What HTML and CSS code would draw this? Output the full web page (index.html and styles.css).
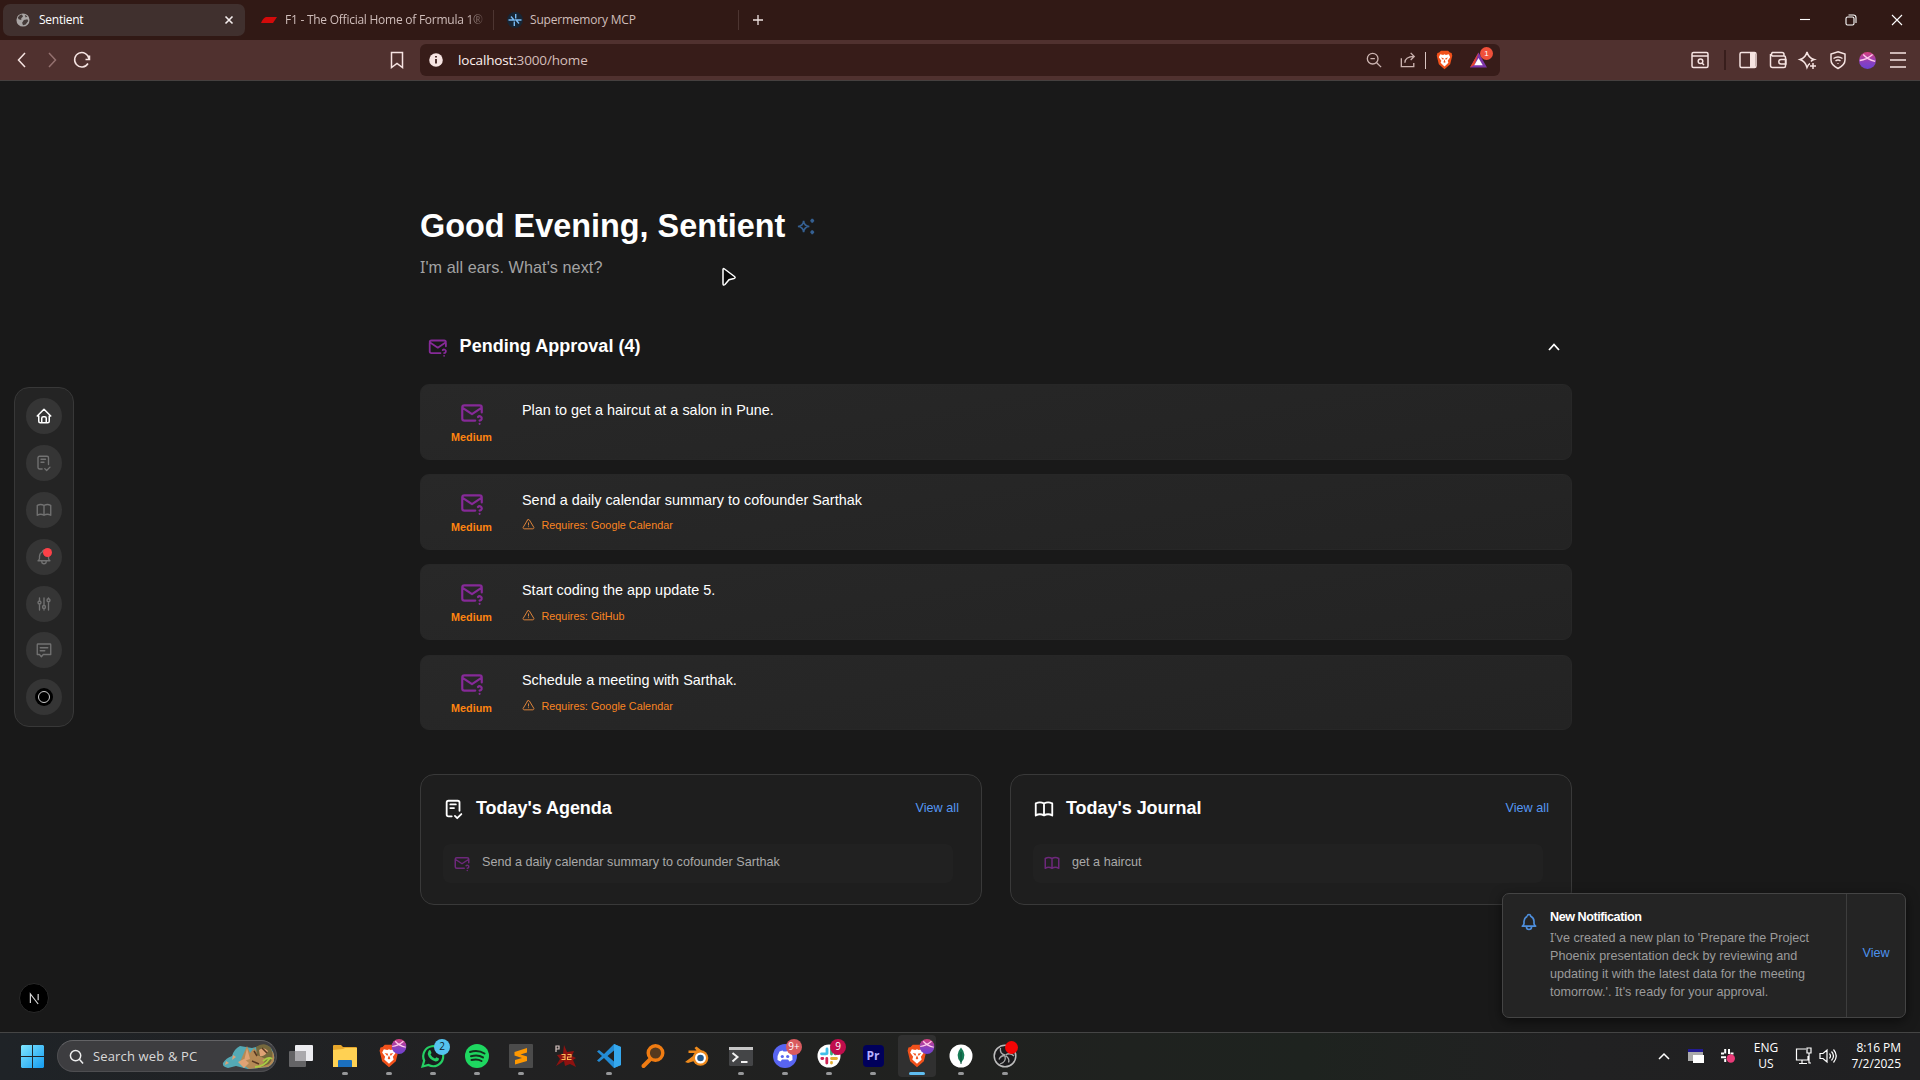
FILE: index.html
```html
<!DOCTYPE html>
<html lang="en">
<head>
<meta charset="utf-8">
<title>Sentient</title>
<link rel="stylesheet" href="styles.css">
</head>
<body>
<svg class="defs" aria-hidden="true">
  <symbol id="mail-q" viewBox="0 0 24 24"><path d="M15 19h-10a2 2 0 0 1-2-2v-10a2 2 0 0 1 2-2h14a2 2 0 0 1 2 2v4.5M19 22v.01M19 19a2.003 2.003 0 0 0 .914-3.782a1.98 1.98 0 0 0-2.414.483M3 7l9 6l9-6"/></symbol>
  <symbol id="journal" viewBox="0 0 24 24"><path d="M3 19a9 9 0 0 1 9 0a9 9 0 0 1 9 0M3 6a9 9 0 0 1 9 0a9 9 0 0 1 9 0M3 6v13M12 6v13M21 6v13"/></symbol>
  <symbol id="agenda" viewBox="0 0 24 24"><path d="M9.500 20h-3.500a2 2 0 0 1-2-2v-13a2 2 0 0 1 2-2h10a2 2 0 0 1 2 2v9M8 7h6M8 11h4M13 19.500l2.500 2.500l4.500-4.500"/></symbol>
  <symbol id="bell" viewBox="0 0 24 24"><path d="M10 5a2 2 0 1 1 4 0a7 7 0 0 1 4 6v3a4 4 0 0 0 2 3h-16a4 4 0 0 0 2-3v-3a7 7 0 0 1 4-6M9 17v1a3 3 0 0 0 6 0v-1"/></symbol>
  <symbol id="alert" viewBox="0 0 24 24"><path d="M12 9v4M10.363 3.591l-8.106 13.534a1.914 1.914 0 0 0 1.636 2.871h16.214a1.914 1.914 0 0 0 1.636-2.870l-8.106-13.536a1.914 1.914 0 0 0-3.274 0zM12 16h.01"/></symbol>
  <symbol id="lion" viewBox="0 0 24 28"><path d="M7 1h10l2.500 2.500 2.500.5 1 4-3 12-8 7-8-7L1 8l1-4 2.500-.5z" fill="#f1511b"/><path d="M6 6l4 1 2-1 2 1 4-1 2 4-3.500 5 1 3-5.500 5-5.500-5 1-3L4 10z" fill="#fff"/><path d="M7 10.500l4 1-1 2.500zM17 10.500l-4 1 1 2.500zM12 13l1.500 4-1.500 1-1.500-1z" fill="#f1511b"/></symbol>
  <symbol id="orb" viewBox="0 0 20 20"><circle cx="10" cy="10" r="10" fill="url(#orb-fill)"/><path d="M1 10Q9 9 16 3M5 3Q10 9 19 11" fill="none" stroke="#ffc9ea" stroke-width="1.600"/></symbol>
  <defs>
    <linearGradient id="orb-fill" x1="0" y1="0" x2="0" y2="1"><stop offset="0" stop-color="#d6407f"/><stop offset=".6" stop-color="#8a3fc0"/><stop offset="1" stop-color="#6c42d0"/></linearGradient>
    <linearGradient id="win-fill" x1="0" y1="0" x2="1" y2="1"><stop offset="0" stop-color="#7fe6ff"/><stop offset="1" stop-color="#149bf0"/></linearGradient>
  </defs>
</svg>

<header class="tabs">
  <div class="tab tab-active">
    <svg class="i14" viewBox="0 0 16 16"><circle cx="8" cy="8" r="7.500" fill="#a9a5a4"/><path d="M2 5q3-4 5-3l1 2-2 2v2l-3-1zM9 8l4-1 1 2-3 4-3 1-1-3zM10 2l3 2-2 1z" fill="#453b39"/></svg>
    <span class="tab-title">Sentient</span>
    <svg class="i10 tab-close" viewBox="0 0 10 10"><path d="M1.500 1.500l7 7M8.500 1.500l-7 7" stroke="#f5eeee" stroke-width="1.600"/></svg>
  </div>
  <div class="tab tab-f1">
    <svg class="i16" viewBox="0 0 16 16"><path d="M5 5h11l-4 6H0q2-5 5-6z" fill="#d30a0a"/></svg>
    <span class="tab-title fade">F1 - The Official Home of Formula 1®</span>
  </div>
  <div class="tab tab-mem">
    <svg class="i16" viewBox="0 0 16 16"><circle cx="8" cy="8" r="8" fill="#182534"/><path d="M1.500 8h5.500l-3-3.500M14.500 8H9l3 3.500M8.700 2v4.500M7.300 14V9.500" fill="none" stroke="#79baf3" stroke-width="1.400"/></svg>
    <span class="tab-title">Supermemory MCP</span>
  </div>
  <svg class="i10 plus" viewBox="0 0 10 10"><path d="M5 0v10M0 5h10" stroke="#eee2e0" stroke-width="1.300"/></svg>
  <div class="win-controls">
    <svg viewBox="0 0 12 12"><path d="M1 5.500h10"/></svg>
    <svg viewBox="0 0 12 12"><rect x="1" y="3" width="8" height="8" rx="1.500"/><path d="M3.500 1h5a2.500 2.500 0 0 1 2.500 2.500v5.500"/></svg>
    <svg viewBox="0 0 12 12"><path d="M1 1l10 10M11 1L1 11"/></svg>
  </div>
</header>

<nav class="toolbar">
  <div class="nav-buttons">
    <svg viewBox="0 0 18 18"><path d="M12 2L5.500 9l6.500 7"/></svg>
    <svg class="dim" viewBox="0 0 18 18"><path d="M6 2l6.500 7L6 16"/></svg>
    <svg viewBox="0 0 18 18"><path d="M16.500 4.500v4H12.500M16 8A7.200 7.200 0 1 0 15 12.500"/></svg>
  </div>
  <svg class="bookmark" viewBox="0 0 14 18"><path d="M1.500 1.500h11v15L7 12.500l-5.500 4z"/></svg>
  <div class="url-bar">
    <svg class="i14" viewBox="0 0 14 14"><circle cx="7" cy="7" r="6.800" fill="#f6e4e2"/><path d="M7 6v4.500M7 3v1.600" stroke="#3c1f1d" stroke-width="1.800"/></svg>
    <span class="url"><b>localhost:</b>3000/home</span>
    <div class="url-icons">
      <svg class="line" viewBox="0 0 18 18"><circle cx="7.500" cy="7.500" r="6"/><path d="M12 12l5 5M5 7.500h5"/></svg>
      <svg class="line" viewBox="0 0 18 18"><path d="M1.500 7v9.500h14v-4M5.500 12q0-6.500 10.500-7M12 1l4 4-4 4"/></svg>
      <i class="url-sep"></i>
      <svg viewBox="0 0 24 28" class="brave"><use href="#lion"/></svg>
      <span class="bat"><svg viewBox="0 0 18 18"><path d="M9 1L0 17h18z" fill="#7b35a8"/><path d="M9 1L0 17l5-3z" fill="#e5432d"/><path d="M9 7l-4.500 7.500h9z" fill="#fff"/></svg><em>1</em></span>
    </div>
  </div>
  <div class="tools">
    <svg viewBox="0 0 18 18"><rect x="1" y="1.500" width="16" height="15" rx="1.500"/><path d="M1 5h16M11 12l2 2"/><circle cx="9.500" cy="10.200" r="2.300"/></svg>
    <i class="tool-sep"></i>
    <svg viewBox="0 0 18 18"><rect x="1" y="1.500" width="16" height="15" rx="1.500"/><path d="M13.500 2v14" stroke-width="5"/></svg>
    <svg viewBox="0 0 18 18"><path d="M15 5V3.500A2 2 0 0 0 13 1.500H3.500a2 2 0 0 0 0 3.500H15a1.500 1.500 0 0 1 1.500 1.500V15A1.500 1.500 0 0 1 15 16.500H3.500A2 2 0 0 1 1.500 14.500V3M17 8.500h-5a2 2 0 0 0 0 4.500h5z"/></svg>
    <svg viewBox="0 0 18 18"><path d="M11 12.500Q9.500 13 8 16.500Q6.500 10.500 1 8.500Q6.500 7 8 1Q9.500 7 15 8.500Q13 9 12 10.500M14 12v6M11 15h6"/></svg>
    <svg viewBox="0 0 18 18"><path d="M9 .8l7 2.200v6q0 5-7 8.500Q2 14 2 9V3zM4.500 7.500q4.500-3 9 0M6.500 10q2.500-2 5 0M9 12v.8"/></svg>
    <svg class="profile" viewBox="0 0 20 20"><use href="#orb"/></svg>
    <svg class="menu" viewBox="0 0 18 18"><path d="M1 2h16M1 9h16M1 16h16"/></svg>
  </div>
</nav>

<main class="page">
  <aside class="rail">
    <span class="rail-item on"><svg viewBox="0 0 24 24"><path d="M5 12H3l9-9l9 9h-2M5 12v7a2 2 0 0 0 2 2h10a2 2 0 0 0 2-2v-7M9 21v-6a2 2 0 0 1 2-2h2a2 2 0 0 1 2 2v6"/></svg></span>
    <span class="rail-item"><svg><use href="#agenda"/></svg></span>
    <span class="rail-item"><svg><use href="#journal"/></svg></span>
    <span class="rail-item"><svg><use href="#bell"/></svg><i class="dot"></i></span>
    <span class="rail-item"><svg viewBox="0 0 24 24"><path d="M4 10a2 2 0 1 0 4 0a2 2 0 0 0-4 0M6 4v4M6 12v8M10 16a2 2 0 1 0 4 0a2 2 0 0 0-4 0M12 4v10M12 18v2M16 7a2 2 0 1 0 4 0a2 2 0 0 0-4 0M18 4v1M18 9v11"/></svg></span>
    <span class="rail-item"><svg viewBox="0 0 24 24"><path d="M7 9h10M7 13h6M3 5a1 1 0 0 1 1-1h16a1 1 0 0 1 1 1v13h-10l-2.500 3l-2.500-3H3z"/></svg></span>
    <span class="rail-item"><i class="avatar"></i></span>
  </aside>

  <section class="content">
    <div class="greeting">
      <h1>Good Evening, Sentient</h1>
      <svg class="sparkles" viewBox="0 0 24 24"><path d="M16 18a2 2 0 0 1 2 2a2 2 0 0 1 2-2a2 2 0 0 1-2-2a2 2 0 0 1-2 2zM16 6a2 2 0 0 1 2 2a2 2 0 0 1 2-2a2 2 0 0 1-2-2a2 2 0 0 1-2 2zM9 18a6 6 0 0 1 6-6a6 6 0 0 1-6-6a6 6 0 0 1-6 6a6 6 0 0 1 6 6z"/></svg>
    </div>
    <p class="sub"><span class="cap">I</span>'m all ears. What's next?</p>

    <div class="section-head">
      <svg class="mail"><use href="#mail-q"/></svg>
      <h2>Pending Approval (4)</h2>
      <svg class="chevron" viewBox="0 0 14 14"><path d="M2 10l5-5.500L12 10"/></svg>
    </div>

    <div class="tasks">
      <article class="task">
        <div class="prio"><svg class="mail"><use href="#mail-q"/></svg><b>Medium</b></div>
        <div class="body"><p>Plan to get a haircut at a salon in Pune.</p></div>
      </article>
      <article class="task">
        <div class="prio"><svg class="mail"><use href="#mail-q"/></svg><b>Medium</b></div>
        <div class="body"><p>Send a daily calendar summary to cofounder Sarthak</p><small><svg><use href="#alert"/></svg>Requires: Google Calendar</small></div>
      </article>
      <article class="task">
        <div class="prio"><svg class="mail"><use href="#mail-q"/></svg><b>Medium</b></div>
        <div class="body"><p>Start coding the app update 5.</p><small><svg><use href="#alert"/></svg>Requires: GitHub</small></div>
      </article>
      <article class="task">
        <div class="prio"><svg class="mail"><use href="#mail-q"/></svg><b>Medium</b></div>
        <div class="body"><p>Schedule a meeting with Sarthak.</p><small><svg><use href="#alert"/></svg>Requires: Google Calendar</small></div>
      </article>
    </div>

    <div class="panels">
      <section class="panel">
        <header><svg><use href="#agenda"/></svg><h3>Today's Agenda</h3><a>View all</a></header>
        <div class="row"><svg><use href="#mail-q"/></svg><span>Send a daily calendar summary to cofounder Sarthak</span></div>
      </section>
      <section class="panel">
        <header><svg><use href="#journal"/></svg><h3>Today's Journal</h3><a>View all</a></header>
        <div class="row"><svg><use href="#journal"/></svg><span>get a haircut</span></div>
      </section>
    </div>
  </section>

  <div class="next-badge"><svg viewBox="0 0 12 12"><path d="M1.500 11V1L10 12M10 1v7" fill="none" stroke="#d8d8d8" stroke-width="1.300"/></svg></div>

  <div class="toast">
    <svg><use href="#bell"/></svg>
    <div class="toast-text">
      <strong>New Notification</strong>
      <p><span class="cap">I</span>'ve created a new plan to 'Prepare the Project<br>Phoenix presentation deck by reviewing and<br>updating it with the latest data for the meeting<br>tomorrow.'. <span class="cap">I</span>t's ready for your approval.</p>
    </div>
    <a>View</a>
  </div>

  <svg class="cursor" viewBox="0 0 16 20"><path d="M2 2.500Q2 1 3.500 2l10 7.500q1.500 1.300-.5 2l-5 1.200-4 4.800q-2 1.500-2-1z" fill="#080808" stroke="#fff" stroke-width="1.500"/></svg>
</main>

<footer class="taskbar">
  <svg class="start" viewBox="0 0 24 24"><path d="M1 0h10.500v11.500H0V1zM12.500 0H23l1 1v10.500H12.500zM0 12.500h11.500V24H1l-1-1zM12.500 12.500H24V23l-1 1H12.500z" fill="url(#win-fill)"/></svg>
  <div class="search">
    <svg class="glass" viewBox="0 0 16 16"><circle cx="7" cy="7" r="5.500"/><path d="M11 11l4 4.500"/></svg>
    <span>Search web &amp; PC</span>
    <svg class="art" viewBox="0 0 52 26"><path d="M0 20q3-5 9-7 2-7 8-10l12 2 8-2q10-3 13 6 4 10-5 15l-20 2-12-3-8 2q-6-1-5-5z" fill="#54a9b5"/><path d="M20 12l4-9 3 7 4-5 4 5 5 1 3-8 7 6q4 10-5 15l-19 2-9-7z" fill="#b58a55"/><path d="M33 4q8-6 15 1 4 10-2 16l-8 3 5-8-9-4z" fill="#75683c"/><path d="M36 7q5-4 9 1-3 6-8 5zM24 5l3 11-6 2zM3 18l3 2-4 2zM10 12l3 2-4 3zM15 19l6-3 5 4-5 5z" fill="#dfa375"/><path d="M32 24q9 0 15-9M40 18q6-5 9-2" stroke="#a8cb43" stroke-width="1.800" fill="none"/><path d="M31 8l3 5M39 5l5 5M29 18l7 3" stroke="#573822" stroke-width="1.500"/></svg>
  </div>
  <div class="apps">
    <span class="app"><svg viewBox="0 0 24 24"><rect y="7" width="17" height="16" rx="1" fill="#646466"/><rect x="6" y="1" width="18" height="16" rx="1" fill="#ececf0"/><path d="M6 7h11v10H6z" fill="#aaa9ad"/></svg></span>
    <span class="app run"><svg viewBox="0 0 24 24"><path d="M0 2q0-1 1-1h7l2 2h13q1 0 1 1v18H0z" fill="#e7a62b"/><path d="M0 6l10-1 2-1h12v19H0z" fill="#ffd153"/><path d="M5 23v-6q0-1 1-1h12q1 0 1 1v6z" fill="#1b6fbd"/></svg></span>
    <span class="app run"><svg viewBox="0 0 24 28"><use href="#lion"/></svg><svg class="mini-orb" viewBox="0 0 20 20"><use href="#orb"/></svg></span>
    <span class="app run"><svg viewBox="0 0 24 24"><path d="M1.500 22.500l1.700-6A10 10 0 1 1 7.500 21z" fill="#191d1e" stroke="#25cf63" stroke-width="2.200"/><path d="M7.500 7q1.500-2 2.500.5l.5 1.500-1 1.500q1.500 3 4.500 4l1.500-1.300 2.500 1.300q0 3-3.500 3Q8 15.500 6.700 10z" fill="#25cf63"/></svg><em class="badge blue">2</em></span>
    <span class="app run"><svg viewBox="0 0 24 24"><circle cx="12" cy="12" r="12" fill="#1ed760"/><path d="M5 8q8-2.500 14.500 1.500M6 12.200q7-2 12 1.200M6.500 16q6-1.500 10 1" fill="none" stroke="#14301d" stroke-width="2" stroke-linecap="round"/></svg></span>
    <span class="app run"><svg viewBox="0 0 24 24"><rect width="24" height="24" rx="1" fill="#4b4b4b"/><path d="M5.500 8L18 4v4.500l-6.500 2 6.500 2V17L6 20.500V16l7-2-7.500-2.500z" fill="#ff9800"/></svg></span>
    <span class="app"><svg viewBox="0 0 24 24"><path d="M11 1l3 7 7-1-2 5 4 2-3 2 3 7-6-3-5 2-1-5-8 5 4-7-3-4 6-1z" fill="#8f1210"/><path d="M3 8V2h3v3H3" fill="none" stroke="#d8c5c2" stroke-width="1.200"/><path d="M8.500 10.500h3.500v5H8.500M9.500 13H12M14.500 10.500H18v2.500h-3.500v2.500H18.500" fill="none" stroke="#ffbb57" stroke-width="1.100"/></svg></span>
    <span class="app run"><svg viewBox="0 0 24 24"><path d="M17 0l7 3v18l-7 3L7 14l-5 4-2-1.500L5 12 0 7.500 2 6l5 4zM17 6.500L10.500 12l6.500 5.500z" fill="#238bd4" fill-rule="evenodd"/><path d="M17 0l7 3v18l-7 3z" fill="#35a8ee"/></svg></span>
    <span class="app"><svg viewBox="0 0 24 24"><circle cx="14.500" cy="9" r="7.300" fill="#55391e" stroke="#f07c12" stroke-width="3.400"/><path d="M9.500 15L2.500 22" stroke="#f07c12" stroke-width="4" stroke-linecap="round"/></svg></span>
    <span class="app"><svg viewBox="0 0 24 24"><path d="M0 18L12 9H3.500V6.500h8L9.500 4l2-1.500L21 10l-9 6-9 3z" fill="#ee8a1c"/><circle cx="15.500" cy="14" r="7.800" fill="#ee8a1c"/><circle cx="15.500" cy="14" r="5.500" fill="#fff"/><circle cx="15.500" cy="14" r="3.300" fill="#23588c"/></svg></span>
    <span class="app run"><svg viewBox="0 0 24 24"><rect y="3" width="24" height="19" rx="1.500" fill="#444547"/><path d="M0 3h24v3H0z" fill="#c6c6c6"/><path d="M3.500 9l5 4-5 4.500M12 18h6.500" fill="none" stroke="#f2f2f2" stroke-width="2"/></svg></span>
    <span class="app run"><svg viewBox="0 0 24 24"><circle cx="12" cy="12" r="12" fill="#5865f2"/><path d="M6.500 7.500l3-1 1 1h3l1-1 3 1q2.500 4 2 8.500l-3 1.500-1.500-2H9l-1.500 2L4.500 16Q4 11.500 6.500 7.500z" fill="#fff"/><circle cx="9.300" cy="12.500" r="1.600" fill="#5865f2"/><circle cx="14.700" cy="12.500" r="1.600" fill="#5865f2"/></svg><em class="badge red">9+</em></span>
    <span class="app run"><svg viewBox="0 0 24 24"><circle cx="12" cy="12" r="11.500" fill="#fff"/><g fill="none" stroke-width="2.800" stroke-linecap="round"><path d="M10 5v4.500M4.500 9.800H9" stroke="#42bfe8"/><path d="M14.500 5v5M19 9.800h-1" stroke="#35b27c"/><path d="M14.500 14.500h5M14.500 18.500v.5" stroke="#e5af32"/><path d="M9.800 14.500V19M4.800 14.500h1" stroke="#cf2456"/></g></svg><em class="badge crimson">9</em></span>
    <span class="app run"><span class="pr">Pr</span></span>
    <span class="app run active"><svg viewBox="0 0 24 28"><use href="#lion"/></svg><svg class="mini-orb" viewBox="0 0 20 20"><use href="#orb"/></svg></span>
    <span class="app run"><svg viewBox="0 0 24 24"><circle cx="12" cy="12" r="11.500" fill="#fff"/><path d="M12 3.500q7 8 0 15.500-7-7.500 0-15.500z" fill="#167a55"/><path d="M12 8v12" stroke="#0c513a"/></svg></span>
    <span class="app run"><svg viewBox="0 0 24 24"><circle cx="12" cy="12" r="10.800" fill="#1b1b1d" stroke="#bcbcbc" stroke-width="1.500"/><path d="M12 11Q6.500 10 7.500 4M12.500 11q4.500-3 8.500 1M12 12q1.500 6-5 8M12 11.500q-4.500 0-6 4M12.500 11.500q4.500 3 3 7" fill="none" stroke="#aaa" stroke-width="1.300"/></svg><i class="rec"></i></span>
  </div>
  <div class="tray">
    <svg class="t-chev" viewBox="0 0 12 12"><path d="M1 9l5-5 5 5"/></svg>
    <svg class="t-win" viewBox="0 0 16 16"><path d="M0 1h15v12H0z" fill="#aaa"/><path d="M0 1h15v3H0z" fill="#221b93"/><path d="M5 7h11v8H5z" fill="#fff"/></svg>
    <svg class="t-slack" viewBox="0 0 16 16"><path d="M5.200 1v4.500M1 5.500h3M9 1v5M10.500 5.500H13.500M1 9.200h5M5.200 11v3" fill="none" stroke="#fff" stroke-width="2"/><circle cx="10.800" cy="10.500" r="4.200" fill="#e93a78"/></svg>
    <div class="lang">ENG<br>US</div>
    <svg class="t-mon" viewBox="0 0 18 18"><path d="M11 2H1.500v11H13V9M4 16.500h8M7 13v3M12 1h4v5h-4zM14 6v10h2"/></svg>
    <svg class="t-vol" viewBox="0 0 18 18"><path d="M1 6.500h3L8 3v12l-4-3.500H1zM10.500 6.500q2 2.500 0 5M12.500 4.500q4 4.500 0 9M14.500 2.500q5.500 6.500 0 13"/></svg>
    <div class="clock">8:16 PM<br>7/2/2025</div>
  </div>
</footer>
</body>
</html>
```
FILE: styles.css
```css
* { box-sizing: border-box; }
body {
  margin: 0; width: 1920px; height: 1080px; overflow: hidden;
  display: flex; flex-direction: column;
  background: #191919; color: #fff;
  font-family: "Liberation Sans", Arial, sans-serif;
}
h1, h2, h3, p { margin: 0; }
em, i { font-style: normal; }
svg { display: block; flex: none; overflow: visible; }
.defs { position: absolute; width: 0; height: 0; }
.i10 { width: 10px; height: 10px; }
.i14 { width: 14px; height: 14px; }
.i16 { width: 16px; height: 16px; }

/* browser chrome */
.tabs {
  height: 40px; flex: none; display: flex; align-items: center; padding-left: 3px;
  background: #311915; font-family: "Open Sans", "Noto Sans", sans-serif; font-size: 12px;
}
.tab { height: 32px; display: flex; align-items: center; color: #d0bebb; }
.tab-title { white-space: nowrap; letter-spacing: -.2px; margin-top: -1px; }
.tab-active { width: 242px; padding: 0 11px 0 13px; gap: 9px; border-radius: 7px; background: #40302e; color: #fff; }
.tab-active .tab-title { letter-spacing: -.25px; }
.tab-close { margin-left: auto; }
.tab-f1 { width: 249px; padding-left: 16px; gap: 8px; border-right: 1px solid #4d3531; }
.tab-f1 .fade { letter-spacing: -.25px; -webkit-mask-image: linear-gradient(90deg, #000 92%, #0003); mask-image: linear-gradient(90deg, #000 92%, #0003); }
.tab-mem { width: 245px; padding-left: 13px; gap: 7px; border-right: 1px solid #4d3531; }
.tab-f1, .tab-mem { height: 20px; }
.plus { margin-left: 14px; }
.win-controls { margin-left: auto; display: flex; gap: 34px; padding-right: 17px; }
.win-controls svg { width: 12px; height: 12px; fill: none; stroke: #fff; stroke-width: 1.1; }

.toolbar {
  height: 41px; flex: none; display: flex; align-items: center; padding-left: 13px;
  background: #50312f; border-bottom: 1px solid #45403f;
}
.toolbar svg { width: 18px; height: 18px; fill: none; stroke: #f6e4e2; stroke-width: 1.5; }
.nav-buttons { display: flex; gap: 12px; }
.nav-buttons .dim { stroke: #94716f; }
.toolbar .bookmark { width: 14px; margin-left: 299px; }
.url-bar {
  width: 1080px; height: 32px; margin-left: 16px; padding: 0 12px 0 9px;
  display: flex; align-items: center; border-radius: 6px; background: #371c19;
}
.url-bar .i14 { width: 14px; height: 14px; stroke: none; }
.url { margin-left: 15px; font: 13.500px "Open Sans", "Noto Sans", sans-serif; color: #d4bebb; letter-spacing: -.15px; }
.url b { font-weight: 400; color: #fff1ef; }
.url-icons { margin-left: auto; display: flex; align-items: center; }
.url-icons .line { stroke: #cbb3b0; width: 16px; height: 16px; margin-right: 18px; }
.url-icons .line + .line { margin-right: 9px; }
.url-sep { width: 1px; height: 17px; background: #d9c5c2; margin-right: 10px; }
.url-icons .brave { width: 17px; height: 20px; stroke: none; margin-right: 18px; }
.bat { position: relative; left: -1px; }
.bat svg { width: 17px; height: 18px; stroke: none; }
.bat em {
  position: absolute; left: 10px; top: -4px; width: 13px; height: 13px; border-radius: 50%;
  background: #f0503a; color: #fff; font-size: 8px; line-height: 13px; text-align: center;
}
.tools { margin-left: auto; padding-right: 13px; display: flex; align-items: center; gap: 12px; }
.tool-sep { width: 2px; height: 20px; margin: 0 1px 0 3px; background: #381e1c; }
.toolbar .profile { width: 17px; height: 19px; stroke: none; }
.toolbar .menu { margin-left: 1px; }

/* page */
.page { position: relative; height: 951px; flex: none; display: flex; align-items: center; padding-left: 14px; }
.rail {
  width: 60px; height: 340px; display: flex; flex-direction: column; align-items: center; gap: 10.900px;
  padding-top: 10.500px; border: 1px solid #383838; border-radius: 15px; background: #242424;
}
.rail-item { position: relative; width: 36px; height: 36px; border-radius: 50%; background: #353535; display: grid; place-items: center; flex: none; }
.rail svg { width: 18px; height: 18px; fill: none; stroke: #727272; stroke-width: 1.8; stroke-linecap: round; stroke-linejoin: round; }
.rail .on svg { stroke: #fff; stroke-width: 2; }
.dot { position: absolute; left: 17px; top: 9px; width: 9px; height: 9px; border-radius: 50%; background: #fb4148; }
.avatar { width: 18px; height: 18px; border-radius: 50%; background: #000; display: grid; place-items: center; }
.avatar::before { content: ""; width: 10px; height: 10px; border-radius: 50%; border: 1.500px solid #ccc; }

.content { width: 1152px; margin-left: 346px; align-self: flex-start; padding-top: 122px; }
.greeting { display: flex; align-items: center; height: 46px; gap: 10px; }
h1 { font-size: 32.400px; font-weight: 700; line-height: 46px; white-space: nowrap; }
.sparkles { width: 23px; height: 23px; fill: none; stroke: #356092; stroke-width: 1.8; }
.sub { margin-top: 5px; height: 26px; font-size: 16.200px; line-height: 26px; letter-spacing: .07px; color: #a3a3a3; }
.cap { font-family: "Noto Sans", sans-serif; font-size: .97em; line-height: 1; }
.section-head { display: flex; align-items: center; height: 50px; margin-top: 41px; padding: 0 11px 0 7px; }
.section-head .mail { width: 21.600px; height: 21.600px; margin-top: 2px; }
.mail, .row svg { fill: none; stroke: #862a98; stroke-width: 2; stroke-linecap: round; stroke-linejoin: round; }
h2 { margin-left: 11px; font-size: 18px; line-height: 26px; letter-spacing: .03px; }
.chevron { width: 14px; height: 14px; margin: 2px 0 0 auto; fill: none; stroke: #fff; stroke-width: 1.8; }
.tasks { display: grid; grid-auto-rows: 75.800px; gap: 14.400px; margin-top: 13px; }
.task { display: flex; border-radius: 9px; background: linear-gradient(170deg, #282828, #232323); border: 1px solid #272727; padding: 13.500px 14px 0; }
.prio { width: 73px; display: flex; flex-direction: column; align-items: center; }
.prio .mail { width: 26px; height: 26px; margin-top: 1px; }
.prio b { font-size: 10.800px; line-height: 14px; margin-top: 4.500px; color: #ff8410; }
.body { margin-left: 14px; }
.body p { font-size: 14.400px; line-height: 22px; white-space: nowrap; letter-spacing: .015px; }
.body small { display: flex; align-items: center; gap: 6.500px; margin-top: 7.700px; line-height: 14px; font-size: 10.800px; color: #f98422; letter-spacing: .02px; }
.body small svg { width: 13px; height: 13px; margin-top: -1px; fill: none; stroke: #e0853a; stroke-width: 1.8; stroke-linecap: round; }
.panels { display: grid; grid-template-columns: 1fr 1fr; gap: 28px; margin-top: 43.500px; }
.panel { height: 131px; border: 1px solid #393939; border-radius: 14px; background: #1e1e1e; padding: 20px 22px 0; }
.panel header { display: flex; align-items: center; height: 27px; }
.panel header svg { width: 22px; height: 22px; margin-top: 1px; fill: none; stroke: #fff; stroke-width: 2; stroke-linecap: round; stroke-linejoin: round; }
h3 { font-size: 18px; line-height: 26px; margin-left: 11px; letter-spacing: -.04px; }
.panel a { margin-left: auto; font-size: 12.600px; color: #5597f3; letter-spacing: .05px; }
.row { display: flex; align-items: center; width: 510px; height: 39px; margin-top: 22px; padding-left: 10px; border-radius: 7px; background: #212121; font-size: 12.600px; color: #a9a9a9; gap: 11px; }
.row svg { width: 18px; height: 18px; stroke: #6d287b; }
.row span { margin-top: -3px; letter-spacing: .02px; }

.next-badge { position: absolute; left: 19px; top: 902px; width: 30px; height: 30px; border-radius: 50%; background: #000; border: 1px solid #292929; display: grid; place-items: center; }
.next-badge svg { width: 11px; height: 11px; }
.toast {
  position: absolute; left: 1502px; top: 812px; width: 404px; height: 125px; display: flex;
  padding-left: 16px; border: 1px solid #444; border-radius: 7px; background: #242424; box-shadow: 0 3px 12px #0008;
}
.toast > svg { width: 20px; height: 20px; margin-top: 18px; fill: none; stroke: #4e8fdd; stroke-width: 2; stroke-linejoin: round; }
.toast-text { margin-left: 11px; padding-top: 13px; width: 296px; font-size: 12.600px; line-height: 18px; color: #9b9b9b; white-space: nowrap; letter-spacing: .02px; }
.toast-text strong { display: block; color: #fff; line-height: 20px; margin-bottom: 2px; font-size: 12.600px; letter-spacing: -.45px; }
.toast a { flex: 1; border-left: 1px solid #3d3d3d; display: grid; place-items: center; padding-bottom: 5px; color: #4d93ee; font-size: 12.600px; }
.cursor { position: absolute; left: 721px; top: 186px; width: 16px; height: 20px; }

/* taskbar */
.taskbar {
  height: 48px; flex: none; display: flex; align-items: center; padding: 0 0 1px 21px; border-top: 1px solid #454545;
  background: linear-gradient(90deg, #1f2327, #212122 25%, #20211f 50%, #1e231f 68%, #212122 82%, #202022);
  font-family: "Open Sans", "Noto Sans", sans-serif; font-size: 12px;
}
.start { width: 23px; height: 23px; }
.search { width: 220px; height: 32px; margin-left: 13px; padding-left: 11px; border-radius: 16px; display: flex; align-items: center; background: #3d3d40; border: 1px solid #4e4e51; border-top-color: #636366; color: #d9d9d9; font-size: 13px; }
.glass { width: 15px; height: 15px; fill: none; stroke: #eee; stroke-width: 1.6; }
.search span { margin: -1px 0 0 9px; width: 108px; white-space: nowrap; letter-spacing: .15px; }
.art { width: 52px; height: 26px; margin-left: 22px; }
.apps { display: flex; gap: 6px; margin-left: 5px; }
.app { position: relative; width: 38px; height: 42px; display: grid; place-items: center; border-radius: 4px; }
.app > svg { width: 24px; height: 24px; }
.app.run::after { content: ""; position: absolute; left: 16px; bottom: 2px; width: 6px; height: 3px; border-radius: 2px; background: #969799; }
.app.active { background: #303030; }
.app.active::after { left: 11px; width: 16px; background: #5fbdf0; }
.app > .mini-orb { position: absolute; left: 21px; top: 4px; width: 16px; height: 15px; }
.badge { position: absolute; left: 20px; top: 4px; width: 16px; height: 16px; border-radius: 8px; font-size: 10px; line-height: 15px; text-align: center; }
.badge.blue { background: #55c3f0; color: #12232c; }
.badge.red { background: #d95b5f; color: #fff; }
.badge.crimson { background: #c00d4c; color: #fff; }
.pr { width: 21px; height: 22px; border-radius: 4px; background: #00005b; color: #b5b0ff; font: 700 12px/21px "Open Sans", sans-serif; text-align: center; }
.rec { position: absolute; left: 19px; top: 6px; width: 13px; height: 13px; border-radius: 50%; background: #f50505; }
.tray { margin-left: auto; padding-right: 19px; display: flex; align-items: center; color: #fff; font-size: 12px; line-height: 16px; }
.tray svg { fill: none; stroke: #fff; stroke-width: 1.2; }
.tray .t-chev { width: 12px; height: 12px; stroke-width: 1.500; }
.tray .t-win { width: 16px; height: 16px; margin-left: 18px; stroke: none; }
.tray .t-slack { width: 16px; height: 16px; margin-left: 16px; stroke: none; }
.lang { width: 30px; margin-left: 15px; text-align: center; }
.tray .t-mon { width: 18px; height: 18px; margin-left: 14px; }
.tray .t-vol { width: 18px; height: 18px; margin-left: 6px; }
.clock { width: 56px; margin-left: 8px; text-align: right; white-space: nowrap; letter-spacing: -.05px; }
```
